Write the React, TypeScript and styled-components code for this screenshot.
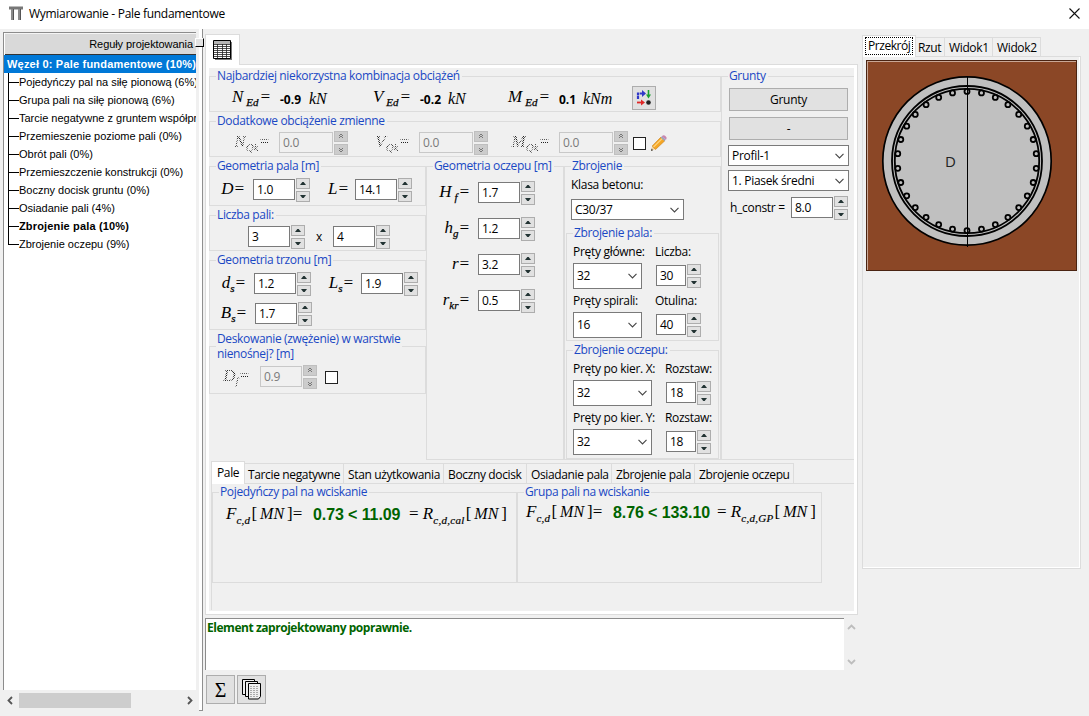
import React from "react";
import styled, { createGlobalStyle, css } from "styled-components";

const LINE = "#dcdcdc";
const UI = `"Open Sans", "Noto Sans", sans-serif`;
const ARIAL = `"Liberation Sans", Arial, sans-serif`;
const SERIF = `"Liberation Serif", "Times New Roman", serif`;

const Global = createGlobalStyle`
  * { box-sizing: border-box; }
  body {
    margin: 0;
    background: #f0f0f0;
    font: 12px/16px ${UI};
    letter-spacing: -0.3px;
    color: #000;
    overflow: hidden;
  }
`;

const Window = styled.div`
  width: 1089px;
  height: 716px;
  display: flex;
  flex-direction: column;
  background: #f0f0f0;
`;

const TitleBar = styled.header`
  height: 29px;
  background: #fff;
  display: flex;
  align-items: center;
  padding: 0 9px 2px 9px;
  gap: 6px;
`;
const TitleText = styled.span`
  flex: 1;
  letter-spacing: -0.3px;
`;

const Body = styled.main`
  flex: 1;
  display: flex;
  min-height: 0;
`;

/* ---------- rules tree ---------- */
const TreePane = styled.aside`
  width: 196px;
  padding: 3px 0 0 3px;
  display: flex;
  flex-direction: column;
  font-family: ${ARIAL};
  font-size: 11px;
  letter-spacing: 0;
`;
const TreeBox = styled.div`
  height: 658px;
  background: #fff;
  border: solid #8c8c8c;
  border-width: 1px 0 0 1px;
  overflow: hidden;
`;
const TreeHeader = styled.div`
  height: 22px;
  margin-left: 1px;
  padding-right: 3px;
  background: #d9d9d9;
  border-bottom: 1px solid #333;
  border-top: 1px solid #f4f4f4;
  text-align: right;
  line-height: 21px;
  letter-spacing: -0.07px;
`;
const TreeRoot = styled.div`
  height: 18px;
  padding-left: 3px;
  background: #0078d7;
  color: #fff;
  font-weight: bold;
  line-height: 18px;
  white-space: nowrap;
  letter-spacing: 0.2px;
`;
const TreeItem = styled.div<{ $bold?: boolean; $last?: boolean }>`
  height: 18px;
  margin-left: 4px;
  display: flex;
  white-space: nowrap;
  line-height: 18px;
  font-weight: ${(p) => (p.$bold ? "bold" : "normal")};
  letter-spacing: ${(p) => (p.$bold ? 0.15 : -0.01)}px;
  &::before {
    content: "";
    flex: none;
    width: 10px;
    height: 9px;
    border: solid #000;
    border-width: 0 0 1px 1px;
  }
  ${(p) =>
    !p.$last &&
    css`
      background: linear-gradient(#000, #000) 0 0 / 1px 100% no-repeat;
    `}
`;
const HScroll = styled.div`
  height: 18px;
  margin-top: 1px;
  display: flex;
  align-items: center;
  justify-content: space-between;
  padding: 0 2px 0 3px;
`;
const Thumb = styled.div`
  width: 112px;
  height: 15px;
  margin-right: 51px;
  background: #cdcdcd;
`;
const Splitter = styled.div`
  width: 4px;
  height: 682px;
  margin-left: 3px;
  background: #fff;
  border: solid #8f8f8f;
  border-width: 0 1px 1px 0;
  position: relative;
`;
const SplitKnob = styled.i`
  position: absolute;
  left: -4px;
  top: 9px;
  width: 9px;
  height: 9px;
  background: #e3e3e3;
  border: 1px solid #fff;
  border-right-color: #000;
  border-bottom-color: #000;
`;

/* ---------- centre ---------- */
const Centre = styled.section`
  width: 655px;
  margin-left: 2px;
  padding-top: 5px;
`;
const IconTab = styled.div`
  width: 35px;
  height: 31px;
  margin-bottom: -1px;
  position: relative;
  background: #fff;
  border: 1px solid ${LINE};
  border-bottom: 0;
  display: flex;
  padding: 5px 0 0 7px;
`;
const Panel = styled.div`
  width: 653px;
  height: 551px;
  border: 1px solid ${LINE};
  background: #fff;
  padding: 3px;
`;
const PanelInner = styled.div`
  height: 543px;
  background: #f0f0f0;
  padding-top: 1px;
`;
const FormArea = styled.div`
  display: flex;
  height: 391px;
`;
const LoadsAndGeometry = styled.div`
  width: 512px;
  display: flex;
  flex-direction: column;
  gap: 2px;
`;
const Columns = styled.div`
  display: flex;
`;
const Stack = styled.div`
  width: 217px;
  display: flex;
  flex-direction: column;
  gap: 2px;
`;
const Group = styled.fieldset<{ $w?: number; $h: number; $pt?: number; $mt?: number; $open?: boolean }>`
  margin: ${(p) => p.$mt ?? 0}px 0 0;
  min-width: 0;
  border: 1px solid ${LINE};
  ${(p) => p.$open && "border-right: 0;"}
  width: ${(p) => (p.$w ? p.$w + "px" : "auto")};
  height: ${(p) => p.$h}px;
  padding: ${(p) => p.$pt ?? 2}px 0 0;
  & > legend {
    margin-left: 6px;
  }
`;
const Legend = styled.legend`
  padding: 0 2px 2px 1px;
  line-height: 13px;
  color: #1a48c4;
  white-space: pre;
  letter-spacing: -0.35px;
`;
const TallLegend = styled(Legend)`
  line-height: 15px;
  padding-bottom: 0;
`;
const Row = styled.div<{ $cols: string; $mt?: number }>`
  display: grid;
  grid-template-columns: ${(p) => p.$cols};
  align-items: center;
  height: 24px;
  margin-top: ${(p) => p.$mt ?? 0}px;
`;

const checker = css`
  color: transparent;
  background: repeating-conic-gradient(#222 0 25%, transparent 0 50%) 0 0 / 2px 2px;
  -webkit-background-clip: text;
  background-clip: text;
`;
const MathText = styled.span<{ $pr?: number; $off?: boolean; $wide?: boolean }>`
  font: italic 17px/20px ${SERIF};
  letter-spacing: 0;
  text-align: right;
  white-space: pre;
  padding-right: ${(p) => p.$pr ?? 0}px;
  padding-bottom: 3px;
  ${(p) => p.$off && checker}
  sub {
    font-size: 11px;
    line-height: 0;
    vertical-align: -4px;
    margin: ${(p) => (p.$wide ? "0 1px 0 3px" : "0")};
    -webkit-text-stroke: ${(p) => (p.$off ? "0" : "0.25px #000")};
  }
`;
const Unit = styled(MathText)`
  font-size: 16px;
  text-align: left;
  padding: 1px 0 0;
`;
const Value = styled.b`
  padding: 3px 0 0 9px;
  letter-spacing: 0;
`;

const SpinBox = styled.div`
  display: flex;
  align-items: flex-start;
  gap: 1px;
`;
const SpinField = styled.span<{ $w: number; $off?: boolean }>`
  width: ${(p) => p.$w}px;
  height: 21px;
  margin-top: 1px;
  padding-left: 3px;
  line-height: 19px;
  border: 1px solid ${(p) => (p.$off ? "#c8c8c8" : "#7a7a7a")};
  background: ${(p) => (p.$off ? "#f0f0f0" : "#fff")};
  color: ${(p) => (p.$off ? "#7a7a7a" : "#000")};
`;
const SpinArrows = styled.span`
  display: grid;
  grid-template-rows: 11px 11px;
  gap: 2px;
`;
const SpinArrow = styled.span<{ $off?: boolean }>`
  width: 14px;
  display: flex;
  align-items: center;
  justify-content: center;
  border: 1px solid ${(p) => (p.$off ? "#bfbfbf" : "#adadad")};
  background: ${(p) => (p.$off ? "#cccccc" : "#e1e1e1")};
`;

function Spin({ value, w = 42, off }: { value: string; w?: number; off?: boolean }) {
  const up = off ? (
    <path d="M3 0.5h2M2 1.5h1M5 1.5h1M3 2.5h2M2 3.5h1M5 3.5h1" stroke="#777" />
  ) : (
    <path d="M3.3 1h1.4L7 4H1z" fill="#233" />
  );
  return (
    <SpinBox>
      <SpinField $w={w} $off={off}>{value}</SpinField>
      <SpinArrows>
        <SpinArrow $off={off}>
          <svg width="8" height="5" viewBox="0 0 8 5">{up}</svg>
        </SpinArrow>
        <SpinArrow $off={off}>
          <svg width="8" height="5" viewBox="0 0 8 5">
            <g transform="matrix(1 0 0 -1 0 5)">{up}</g>
          </svg>
        </SpinArrow>
      </SpinArrows>
    </SpinBox>
  );
}

const SelectBox = styled.div<{ $w: number; $h?: number }>`
  width: ${(p) => p.$w}px;
  height: ${(p) => p.$h ?? 21}px;
  border: 1px solid #7a7a7a;
  background: #fff;
  display: flex;
  align-items: center;
  justify-content: space-between;
  padding: 0 4px 0 3px;
`;
function Select({ value, w, h }: { value: string; w: number; h?: number }) {
  return (
    <SelectBox $w={w} $h={h}>
      <span>{value}</span>
      <svg width="9" height="6" viewBox="0 0 9 6">
        <path d="M0.5 0.9L4.5 4.9L8.5 0.9" fill="none" stroke="#444" strokeWidth="1.1" />
      </svg>
    </SelectBox>
  );
}

const Check = styled.span`
  width: 13px;
  height: 13px;
  justify-self: end;
  border: 1px solid #222;
  background: #fff;
`;
const ToolButton = styled.span<{ $s: number }>`
  width: ${(p) => p.$s}px;
  height: ${(p) => p.$s}px;
  display: flex;
  align-items: center;
  justify-content: center;
  border: 1px solid #adadad;
  background: #e1e1e1;
`;
const Sigma = styled.span`
  font: 20px/24px ${SERIF};
`;
const PushButton = styled.div`
  width: 119px;
  height: 23px;
  margin: 0 0 6px 7px;
  border: 1px solid #adadad;
  background: #e1e1e1;
  text-align: center;
  line-height: 21px;
`;
const SoilSelects = styled.div`
  margin: -1px 0 0 6px;
  display: grid;
  gap: 4px;
`;
const RowText = styled.span<{ $pl?: number }>`
  padding-left: ${(p) => p.$pl ?? 0}px;
  white-space: pre;
`;
const ConcreteClass = styled.div`
  margin-left: 6px;
  display: grid;
  gap: 6px;
`;
const BarLabels = styled.div<{ $cols: string }>`
  display: grid;
  grid-template-columns: ${(p) => p.$cols};
  height: 16px;
  padding-left: 6px;
  margin-bottom: 3px;
  white-space: nowrap;
`;
const BarFields = styled.div<{ $cols: string }>`
  display: grid;
  grid-template-columns: ${(p) => p.$cols};
  align-items: center;
  height: 26px;
  padding-left: 6px;
  margin-bottom: 4px;
`;
const SubGroups = styled.div`
  margin: 6px 0 0 1px;
  display: grid;
  gap: 2px;
`;

/* ---------- tabs ---------- */
const Tabs = styled.nav<{ $ml: number; $h: number }>`
  display: flex;
  align-items: flex-end;
  height: ${(p) => p.$h}px;
  margin: 0 0 -1px ${(p) => p.$ml}px;
`;
const Tab = styled.span<{ $w: number; $on?: boolean; $pl?: number; $h?: number; $pt?: number }>`
  width: ${(p) => p.$w}px;
  height: ${(p) => p.$h ?? (p.$on ? 23 : 21)}px;
  position: relative;
  white-space: nowrap;
  padding: ${(p) => p.$pt ?? 3}px 0 0 ${(p) => p.$pl ?? 4}px;
  line-height: 16px;
  letter-spacing: -0.36px;
  border: 1px solid ${LINE};
  border-left-width: ${(p) => (p.$on ? 1 : 0)}px;
  ${(p) => p.$on && "background: #fff; border-bottom: 0;"}
`;
const ResultPage = styled.div`
  height: 127px;
  margin-left: 2px;
  padding-top: 1px;
  border: solid ${LINE};
  border-width: 1px 0 0 1px;
  display: flex;
`;
const Formula = styled.div<{ $top: number; $ml: number }>`
  display: flex;
  align-items: center;
  margin: ${(p) => p.$top}px 0 0 ${(p) => p.$ml}px;
  white-space: pre;
`;
const FormulaPart = styled.span<{ $w: number }>`
  width: ${(p) => p.$w}px;
  padding-bottom: 3px;
  font: italic 17px/23px ${SERIF};
  letter-spacing: 0;
  i { font-size: 16px; margin: 0 3px 0 3px; }
  em { font-style: normal; }
  sub {
    font-size: 11px;
    line-height: 0;
    vertical-align: -5px;
    letter-spacing: 0.3px;
    margin: 0 1px 0 0;
    -webkit-text-stroke: 0.2px #000;
  }
`;
const Result = styled.b<{ $w: number }>`
  width: ${(p) => p.$w}px;
  font: bold 16px/24px ${ARIAL};
  letter-spacing: -0.1px;
  color: #006400;
`;

/* ---------- message ---------- */
const MessageRow = styled.div`
  display: flex;
  margin-top: 3px;
  height: 52px;
`;
const MessageBox = styled.div`
  width: 639px;
  border: solid #8c8c8c;
  border-width: 1px 0 0 1px;
  background: #fff;
  padding: 0 0 0 1px;
  color: #006400;
  font: bold 12px/18px ${UI};
  letter-spacing: -0.46px;
`;
const VScroll = styled.div`
  padding: 5px 0 4px 3px;
  display: flex;
  flex-direction: column;
  justify-content: space-between;
`;
const Buttons = styled.div`
  display: flex;
  gap: 2px;
  margin: 5px 0 0 1px;
`;

/* ---------- preview ---------- */
const Preview = styled.section`
  width: 219px;
  margin-left: 2px;
  padding-top: 5px;
`;
const Focus = styled.span`
  display: block;
  width: 48px;
  height: 18px;
  outline: 1px dotted #000;
  outline-offset: -1px;
  line-height: 17px;
  padding-left: 3px;
  letter-spacing: -0.45px;
`;
const PreviewPanel = styled.div`
  height: 513px;
  border: 1px solid ${LINE};
  padding: 3px 0 0 3px;
  box-shadow: inset -1px -1px #fff;
`;
const Canvas = styled.svg`
  display: block;
`;

const treeItems: [string, boolean?][] = [
  ["Pojedyńczy pal na siłę pionową (6%)"],
  ["Grupa pali na siłę pionową (6%)"],
  ["Tarcie negatywne z gruntem współpracującym (0%)"],
  ["Przemieszenie poziome pali (0%)"],
  ["Obrót pali (0%)"],
  ["Przemieszczenie konstrukcji (0%)"],
  ["Boczny docisk gruntu (0%)"],
  ["Osiadanie pali (4%)"],
  ["Zbrojenie pala (10%)", true],
  ["Zbrojenie oczepu (9%)"],
];

const resultTabs: [string, number][] = [
  ["Tarcie negatywne", 99],
  ["Stan użytkowania", 100],
  ["Boczny docisk", 83],
  ["Osiadanie pala", 85],
  ["Zbrojenie pala", 83],
  ["Zbrojenie oczepu", 99],
];

function Sym({ s, sub, pr, off, wide }: { s: string; sub?: string; pr?: number; off?: boolean; wide?: boolean }) {
  return (
    <MathText $pr={pr} $off={off} $wide={wide}>
      {s}
      {sub && <sub>{sub}</sub>}=
    </MathText>
  );
}

function PileSection() {
  const bars = Array.from({ length: 30 }, (_, i) => {
    const a = (i * 12 * Math.PI) / 180;
    return [101 + 69.6 * Math.sin(a), 101 - 69.6 * Math.cos(a)];
  });
  return (
    <Canvas width="211" height="211" viewBox="0 0 211 211">
      <rect x="0.5" y="0.5" width="210" height="210" fill="#8b4726" stroke="#4a2412" />
      <path d="M1 1.5H210M1.5 1V210" stroke="#c9a795" />
      <circle cx="101" cy="101" r="84.2" fill="#c0c0c0" stroke="#000" strokeWidth="1.7" />
      <circle cx="101" cy="101" r="75" fill="none" stroke="#000" strokeWidth="1.8" />
      <circle cx="101" cy="101" r="72.2" fill="none" stroke="#000" strokeWidth="1.8" />
      {bars.map(([x, y], i) => (
        <circle key={i} cx={x} cy={y} r="2.5" fill="#c0c0c0" stroke="#000" strokeWidth="1.8" />
      ))}
      <path d="M101.5 16V187" stroke="#000" />
      <text x="79" y="107" fontFamily="Open Sans" fontSize="15" fill="#222">D</text>
    </Canvas>
  );
}

const Chevron = ({ d, c = "#555" }: { d: string; c?: string }) => (
  <svg width="9" height="9" viewBox="0 0 9 9">
    <path d={d} fill="none" stroke={c} strokeWidth="1.8" />
  </svg>
);

export default function App() {
  return (
    <Window>
      <Global />
      <TitleBar>
        <svg width="14" height="15" viewBox="0 0 14 15">
          <path d="M0 0.5h14v3H0z" fill="#777" />
          <path d="M2 3h3v11H2zM9 3h3v11H9z" fill="#8b8b8b" />
          <path d="M4.5 3v11M11.5 3v11" stroke="#555" />
        </svg>
        <TitleText>Wymiarowanie - Pale fundamentowe</TitleText>
        <svg width="11" height="11" viewBox="0 0 11 11">
          <path d="M0.5 0.5L10.5 10.5M10.5 0.5L0.5 10.5" stroke="#111" strokeWidth="1.1" />
        </svg>
      </TitleBar>
      <Body>
        <TreePane>
          <TreeBox>
            <TreeHeader>Reguły projektowania</TreeHeader>
            <TreeRoot>Węzeł 0: Pale fundamentowe (10%)</TreeRoot>
            {treeItems.map(([t, b], i) => (
              <TreeItem key={t} $bold={b} $last={i === treeItems.length - 1}>{t}</TreeItem>
            ))}
          </TreeBox>
          <HScroll>
            <Chevron d="M6 1L2.5 4.5L6 8" />
            <Thumb />
            <Chevron d="M3 1L6.5 4.5L3 8" />
          </HScroll>
        </TreePane>
        <Splitter><SplitKnob /></Splitter>

        <Centre>
          <IconTab>
            <svg width="19" height="20" viewBox="0 0 19 20">
              <path d="M2 2h17v18H2z" fill="#777" />
              <path d="M0.5 0.5h17v18h-17z" fill="#fff" stroke="#000" />
              <path d="M1 1h16v3H1z" fill="#b5b5b5" />
              <path d="M1 4.5h16M1 6.5h16M1 8.5h16M1 10.5h16M1 12.5h16M1 14.5h16M1 16.5h16M4.5 4v14M9.5 4v14M13.5 4v14" stroke="#222" strokeWidth="0.8" />
            </svg>
          </IconTab>
          <Panel>
            <PanelInner>
              <FormArea>
                <LoadsAndGeometry>
                  <Group $h={43}>
                    <Legend>Najbardziej niekorzystna kombinacja obciążeń</Legend>
                    <Row $cols="61px 38px 41px 61px 37px 41px 61px 33px 49px 24px">
                      <Sym s="N" sub="Ed" wide />
                      <Value>-0.9</Value>
                      <Unit>kN</Unit>
                      <Sym s="V" sub="Ed" wide />
                      <Value>-0.2</Value>
                      <Unit>kN</Unit>
                      <Sym s="M" sub="Ed" wide />
                      <Value>0.1</Value>
                      <Unit>kNm</Unit>
                      <ToolButton $s={24}>
                        <svg width="16" height="16" viewBox="0 0 16 16">
                          <path d="M2 9V3.5h5" fill="none" stroke="#3038c8" strokeWidth="2.2" strokeDasharray="3 0.6" />
                          <path d="M6 0l4 3.5L6 7z" fill="#3038c8" />
                          <path d="M12.5 0v6" stroke="#18a030" strokeWidth="1.6" />
                          <path d="M10 4.5h5L12.5 8.5z" fill="#18a030" />
                          <path d="M1 12.5h5" stroke="#e02828" strokeWidth="1.8" />
                          <path d="M5 9.5l4 3-4 3z" fill="#e02828" />
                          <circle cx="12.5" cy="12.5" r="2.3" fill="#222" />
                        </svg>
                      </ToolButton>
                    </Row>
                  </Group>
                  <Group $h={43}>
                    <Legend>Dodatkowe obciążenie zmienne</Legend>
                    <Row $cols="69px 69px 71px 69px 71px 69px 18px 21px">
                      <Sym s="N" sub="Qk" pr={9} off />
                      <Spin value="0.0" w={54} off />
                      <Sym s="V" sub="Qk" pr={9} off />
                      <Spin value="0.0" w={54} off />
                      <Sym s="M" sub="Qk" pr={9} off />
                      <Spin value="0.0" w={54} off />
                      <Check />
                      <svg width="21" height="16" viewBox="0 0 21 16">
                        <path d="M5 16l1.2-5L9 14.3z" fill="#f2d3a0" />
                        <path d="M5 16l0.6-2.4L7 15.2z" fill="#333" />
                        <path d="M6.2 11L15 2l4 3.6L9.5 14.5z" fill="#f5a623" stroke="#c77a10" strokeWidth="0.6" />
                        <path d="M7.5 12L16.5 3.2" stroke="#ffd27a" strokeWidth="1.2" />
                        <path d="M14.6 2.6L16 1.2l3.8 3.6-1.4 1.3z" fill="#9aa7c0" />
                        <path d="M15.8 1.4c1-1.4 2.4-1.4 3.6-0.4 1.4 1.2 1.6 2.4 0.6 3.8z" fill="#c888b0" />
                      </svg>
                    </Row>
                  </Group>
                  <Columns>
                    <Stack>
                      <Group $h={47} $pt={4}>
                        <Legend>Geometria pala [m]</Legend>
                        <Row $cols="43px 57px 45px 57px">
                          <Sym s="D" pr={8} />
                          <Spin value="1.0" />
                          <Sym s="L" pr={6} />
                          <Spin value="14.1" />
                        </Row>
                      </Group>
                      <Group $h={43}>
                        <Legend>Liczba pali:</Legend>
                        <Row $cols="38px 57px 28px 57px">
                          <span />
                          <Spin value="3" />
                          <RowText $pl={11}>x</RowText>
                          <Spin value="4" />
                        </Row>
                      </Group>
                      <Group $h={77} $pt={4}>
                        <Legend>Geometria trzonu [m]</Legend>
                        <Row $cols="44px 57px 50px 57px">
                          <Sym s="d" sub="s" pr={8} />
                          <Spin value="1.2" />
                          <Sym s="L" sub="s" pr={7} />
                          <Spin value="1.9" />
                        </Row>
                        <Row $cols="45px 57px" $mt={6}>
                          <Sym s="B" sub="s" pr={8} />
                          <Spin value="1.7" />
                        </Row>
                      </Group>
                      <Group $h={63} $pt={4} $mt={-1}>
                        <TallLegend>{"Deskowanie (zwężenie) w warstwie\nnienośnej? [m]"}</TallLegend>
                        <Row $cols="50px 57px 21px">
                          <Sym s="D" sub="f" pr={10} off />
                          <Spin value="0.9" off />
                          <Check />
                        </Row>
                      </Group>
                    </Stack>
                    <Group $w={138} $h={301} $pt={7}>
                      <Legend>Geometria oczepu [m]</Legend>
                      <Row $cols="51px 57px">
                        <Sym s="H" sub="f" pr={8} wide />
                        <Spin value="1.7" />
                      </Row>
                      <Row $cols="51px 57px" $mt={12}>
                        <Sym s="h" sub="g" pr={8} />
                        <Spin value="1.2" />
                      </Row>
                      <Row $cols="51px 57px" $mt={12}>
                        <Sym s="r" pr={8} />
                        <Spin value="3.2" />
                      </Row>
                      <Row $cols="51px 57px" $mt={12}>
                        <Sym s="r" sub="kr" pr={8} />
                        <Spin value="0.5" />
                      </Row>
                    </Group>
                    <Group $w={157} $h={301} $pt={3}>
                      <Legend>Zbrojenie</Legend>
                      <ConcreteClass>
                        <span>Klasa betonu:</span>
                        <Select value="C30/37" w={113} />
                      </ConcreteClass>
                      <SubGroups>
                        <Group $w={153} $h={115} $pt={3}>
                          <Legend>Zbrojenie pala:</Legend>
                          <BarLabels $cols="82px 1fr"><span>Pręty główne:</span><span>Liczba:</span></BarLabels>
                          <BarFields $cols="83px 1fr"><Select value="32" w={69} h={26} /><Spin value="30" w={30} /></BarFields>
                          <BarLabels $cols="82px 1fr"><span>Pręty spirali:</span><span>Otulina:</span></BarLabels>
                          <BarFields $cols="83px 1fr"><Select value="16" w={69} h={26} /><Spin value="40" w={30} /></BarFields>
                        </Group>
                        <Group $w={153} $h={116} $pt={3}>
                          <Legend>Zbrojenie oczepu:</Legend>
                          <BarLabels $cols="92px 1fr"><span>Pręty po kier. X:</span><span>Rozstaw:</span></BarLabels>
                          <BarFields $cols="93px 1fr"><Select value="32" w={79} h={26} /><Spin value="18" w={30} /></BarFields>
                          <BarLabels $cols="92px 1fr"><span>Pręty po kier. Y:</span><span>Rozstaw:</span></BarLabels>
                          <BarFields $cols="93px 1fr"><Select value="32" w={79} h={26} /><Spin value="18" w={30} /></BarFields>
                        </Group>
                      </SubGroups>
                    </Group>
                  </Columns>
                </LoadsAndGeometry>
                <Group $w={133} $h={391} $pt={4} $open>
                  <Legend>Grunty</Legend>
                  <PushButton>Grunty</PushButton>
                  <PushButton>-</PushButton>
                  <SoilSelects>
                    <Select value="Profil-1" w={121} />
                    <Select value="1. Piasek średni" w={121} />
                  </SoilSelects>
                  <Row $cols="69px 57px" $mt={5}>
                    <RowText $pl={8}>h_constr =</RowText>
                    <Spin value="8.0" />
                  </Row>
                </Group>
              </FormArea>

              <Tabs $ml={2} $h={24}>
                <Tab $w={34} $on $pl={5}>Pale</Tab>
                {resultTabs.map(([t, w], i) => (
                  <Tab key={t} $w={w} $pl={i === 0 ? 3 : 4}>{t}</Tab>
                ))}
              </Tabs>
              <ResultPage>
                <Group $w={305} $h={98} $pt={0}>
                  <Legend>Pojedyńczy pal na wciskanie</Legend>
                  <Formula $top={2} $ml={13}>
                    <FormulaPart $w={87}>F<sub>c,d</sub><em>[</em><i>MN</i><em>]=</em></FormulaPart>
                    <Result $w={96}>0.73 &lt; 11.09</Result>
                    <FormulaPart $w={96}><em>= </em>R<sub>c,d,cal</sub><em>[</em><i>MN</i><em>]</em></FormulaPart>
                  </Formula>
                </Group>
                <Group $w={305} $h={98} $pt={0}>
                  <Legend>Grupa pali na wciskanie</Legend>
                  <Formula $top={0} $ml={8}>
                    <FormulaPart $w={87}>F<sub>c,d</sub><em>[</em><i>MN</i><em>]=</em></FormulaPart>
                    <Result $w={104}>8.76 &lt; 133.10</Result>
                    <FormulaPart $w={96}><em>= </em>R<sub>c,d,GP</sub><em>[</em><i>MN</i><em>]</em></FormulaPart>
                  </Formula>
                </Group>
              </ResultPage>
            </PanelInner>
          </Panel>
          <MessageRow>
            <MessageBox>Element zaprojektowany poprawnie.</MessageBox>
            <VScroll>
              <Chevron d="M1 6L4.5 2.5L8 6" c="#bdbdbd" />
              <Chevron d="M1 3L4.5 6.5L8 3" c="#bdbdbd" />
            </VScroll>
          </MessageRow>
          <Buttons>
            <ToolButton $s={29}><Sigma>Σ</Sigma></ToolButton>
            <ToolButton $s={29}>
              <svg width="20" height="21" viewBox="0 0 20 21">
                <path d="M0.5 0.5h12v15h-12z" fill="#eee" stroke="#000" />
                <path d="M3.5 2.5h12v15h-12z" fill="#eee" stroke="#000" />
                <path d="M6.5 4.5h12v13l-2 2.5h-10z" fill="#eee" stroke="#000" />
                <path d="M8 7.5h9M8 9.5h9M8 11.5h9M8 13.5h9M8 15.5h9M8 17.5h8" stroke="#aaa" strokeDasharray="2 1" />
              </svg>
            </ToolButton>
          </Buttons>
        </Centre>

        <Preview>
          <Tabs $ml={0} $h={23}>
            <Tab $w={54} $on $pl={2} $h={22} $pt={1}><Focus>Przekrój</Focus></Tab>
            <Tab $w={29} $pl={2} $h={20} $pt={2}>Rzut</Tab>
            <Tab $w={48} $h={20} $pt={2}>Widok1</Tab>
            <Tab $w={48} $h={20} $pt={2}>Widok2</Tab>
          </Tabs>
          <PreviewPanel><PileSection /></PreviewPanel>
        </Preview>
      </Body>
    </Window>
  );
}
